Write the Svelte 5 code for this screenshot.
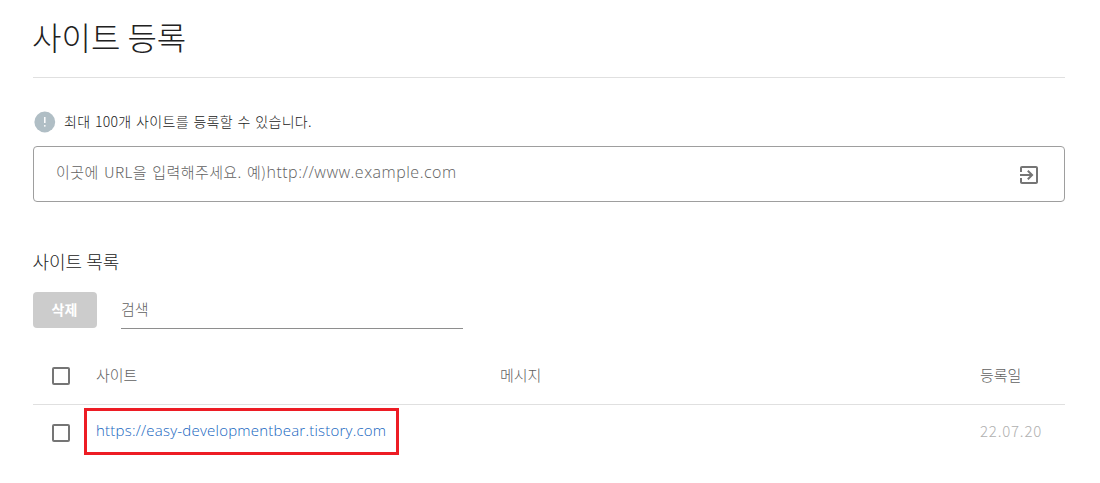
<script lang="ts">
	interface Site {
		url: string;
		message: string;
		date: string;
		highlighted: boolean;
	}

	let sites: Site[] = $state([
		{
			url: 'https://easy-developmentbear.tistory.com',
			message: '',
			date: '22.07.20',
			highlighted: true
		}
	]);
</script>

<main class="page">
	<h1 class="title">사이트 등록</h1>

	<p class="notice">
		<svg class="notice-icon" viewBox="0 0 22 22" aria-hidden="true">
			<circle cx="10.8" cy="11" r="10.4" fill="#b0bec5" />
			<path d="M10.8 6v6" stroke="#fff" stroke-width="1.5" />
			<circle cx="10.8" cy="14.8" r="0.9" fill="#fff" />
		</svg>
		<span class="notice-text">최대 100개 사이트를 등록할 수 있습니다.</span>
	</p>

	<div class="url-field">
		<span class="placeholder">이곳에 URL을 입력해주세요. 예)<span class="sample">http://www.example.com</span></span>
		<svg class="enter-icon" viewBox="0 0 24 24" aria-hidden="true">
			<path
				fill="#757575"
				d="M10.09 15.59L11.5 17l5-5-5-5-1.41 1.41L12.67 11H3v2h9.67l-2.58 2.59zM19 3H5c-1.11 0-2 .9-2 2v4h2V5h14v14H5v-4H3v4c0 1.1.89 2 2 2h14c1.1 0 2-.9 2-2V5c0-1.1-.9-2-2-2z"
			/>
		</svg>
	</div>

	<h2 class="subtitle">사이트 목록</h2>

	<div class="toolbar">
		<button class="delete" disabled>삭제</button>
		<div class="search">검색</div>
	</div>

	<div class="row head">
		<span class="checkbox"></span>
		<span class="site">사이트</span>
		<span class="message">메시지</span>
		<span class="date">등록일</span>
	</div>
	{#each sites as site}
		<div class="row">
			<span class="checkbox"></span>
			<span class="site link" class:highlighted={site.highlighted}>{site.url}</span>
			<span class="message">{site.message}</span>
			<span class="date">{site.date}</span>
		</div>
	{/each}
</main>

<style>
	:global(body) {
		background: #fff;
	}

	.page {
		box-sizing: border-box;
		width: 1100px;
		height: 483px;
		padding: 0 35px 0 33px;
		overflow: hidden;
		font-family: 'Noto Sans CJK KR', sans-serif;
		font-weight: 300;
		color: #212121;
	}

	.title {
		box-sizing: border-box;
		height: 78px;
		margin: 0;
		padding-top: 13px;
		border-bottom: 1px solid #e0e0e0;
		font-size: 32px;
		font-weight: 300;
		line-height: 46px;
		text-indent: -1px;
	}

	.notice {
		display: flex;
		align-items: center;
		height: 22px;
		margin: 33px 0 13px;
		font-size: 14px;
	}

	.notice-icon {
		width: 22px;
		height: 22px;
		margin: 0 8px 0 1px;
	}

	.notice-text {
		padding-bottom: 2px;
		letter-spacing: 0.3px;
		word-spacing: 1.2px;
	}

	.url-field {
		box-sizing: border-box;
		display: flex;
		align-items: center;
		justify-content: space-between;
		height: 56px;
		padding: 1px 23.5px 0 22px;
		border: 1px solid #9e9e9e;
		border-radius: 4px;
		color: #616161;
		font-size: 15px;
		letter-spacing: 0.4px;
		word-spacing: 1.7px;
	}

	.placeholder {
		padding-bottom: 5px;
	}

	.sample {
		font-family: 'Open Sans', sans-serif;
		font-size: 16px;
		letter-spacing: 0.5px;
	}

	.enter-icon {
		width: 24px;
		height: 24px;
	}

	.subtitle {
		height: 26px;
		margin: 46px 0 18px;
		font-size: 18px;
		font-weight: 300;
		line-height: 26px;
		text-indent: -0.5px;
	}

	.toolbar {
		display: flex;
		gap: 24px;
		height: 37px;
	}

	.delete {
		width: 64px;
		height: 36px;
		padding: 0 1px 2px 0;
		border: 0;
		border-radius: 4px;
		background: #ccc;
		color: #fff;
		font-family: inherit;
		font-size: 14px;
		font-weight: 700;
	}

	.search {
		box-sizing: border-box;
		width: 342px;
		border-bottom: 1px solid #8e8e8e;
		color: #616161;
		font-size: 15px;
		line-height: 34px;
	}

	.row {
		display: grid;
		grid-template-columns: 63px 404px 480px auto;
		align-items: center;
		height: 56px;
		font-size: 15px;
	}

	.row.head {
		margin-top: 19px;
		border-bottom: 1px solid #e0e0e0;
		color: #616161;
	}

	.checkbox {
		box-sizing: border-box;
		width: 18px;
		height: 18px;
		margin-left: 19px;
		border: 2px solid #757575;
		border-radius: 2px;
	}

	.site,
	.message,
	.date {
		padding-bottom: 3px;
	}

	.link {
		position: relative;
		justify-self: start;
		padding-bottom: 6px;
		color: #1565c0;
		font-family: 'Open Sans', sans-serif;
		letter-spacing: 0.22px;
	}

	.highlighted::after {
		content: '';
		position: absolute;
		top: -12px;
		left: -12px;
		box-sizing: border-box;
		width: 315px;
		height: 47px;
		border: 3px solid #ed1c24;
	}

	.row:not(.head) .date {
		padding-bottom: 6px;
		color: #b0b0b0;
		letter-spacing: 0.8px;
	}
</style>
